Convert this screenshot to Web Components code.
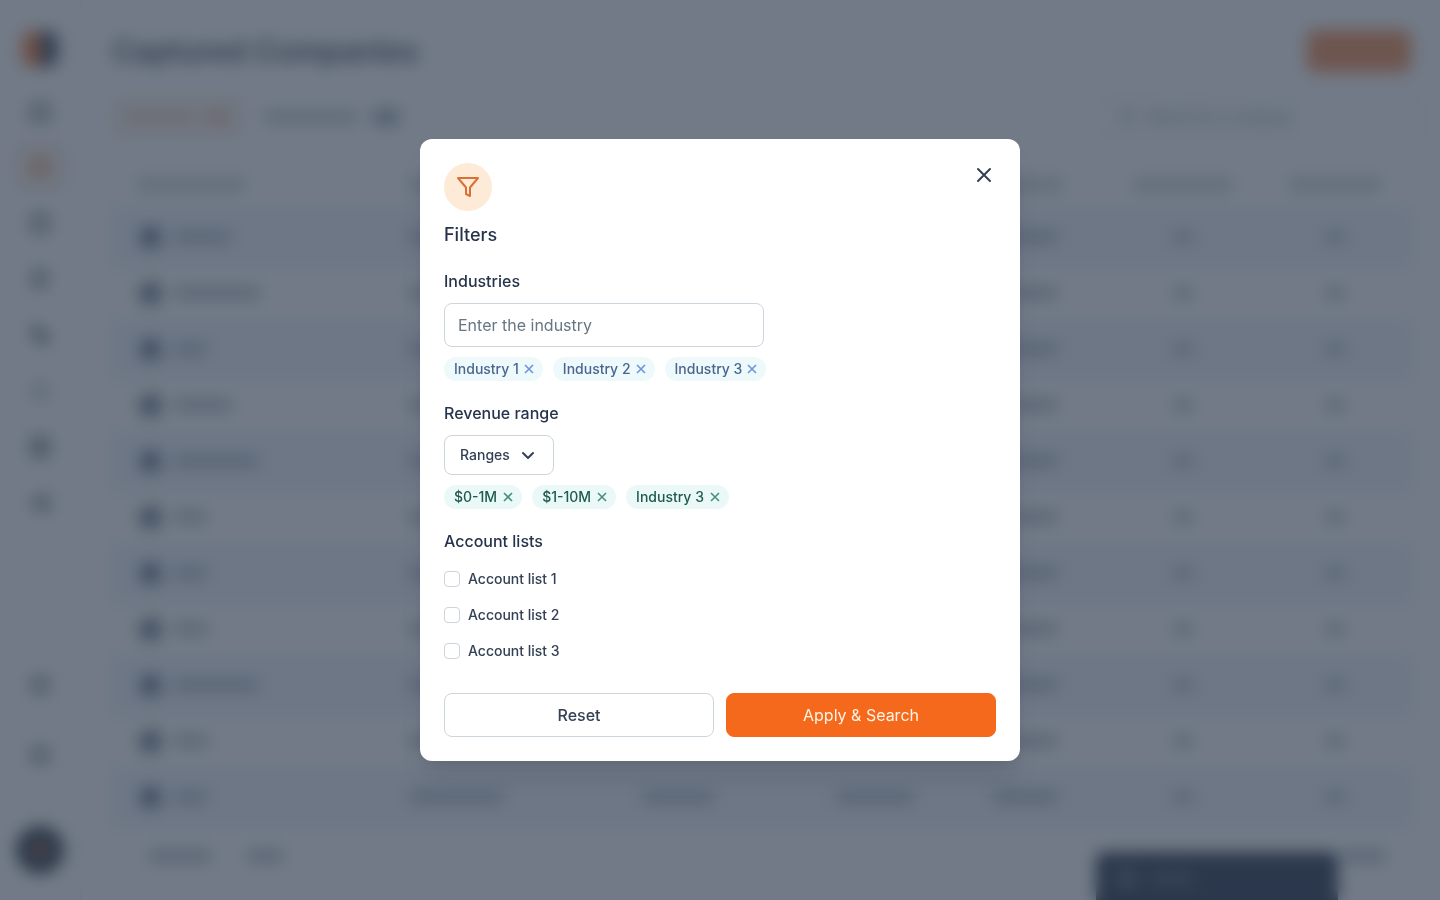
<!DOCTYPE html>
<html lang="en">
<head>
<meta charset="utf-8">
<meta name="viewport" content="width=device-width, initial-scale=1">
<title>Captured Companies</title>
<style>
  html, body { margin: 0; height: 100%; }
  body { font-family: Inter, "Liberation Sans", sans-serif; color: #1d2939; background: #fff; overflow: hidden; }
</style>
</head>
<body>
<companies-page inert></companies-page>
<modal-overlay>
  <filters-dialog></filters-dialog>
</modal-overlay>

<script>
const define = (name, html, setup) => {
  const template = document.createElement('template');
  template.innerHTML = html;
  customElements.define(name, class extends HTMLElement {
    constructor() {
      super();
      this.attachShadow({ mode: 'open' }).append(template.content.cloneNode(true));
    }
    connectedCallback() {
      if (setup) setup(this, this.shadowRoot);
    }
  });
};

/* Grey bar standing in for a value that is still loading. */
define('text-bar', `
  <style>
    :host { display: block; height: 10px; width: 60px; border-radius: 4px; background: var(--bar, #a3adbb); }
  </style>`, (el) => { el.style.width = (el.getAttribute('w') || 60) + 'px'; });

define('side-nav', `
  <style>
    :host { display: flex; flex-direction: column; align-items: center; box-sizing: border-box; width: 82px;
      padding: 31px 0 26px 0; border-right: 2px solid #eaecf0; background: #fff; }
    .logo { display: flex; width: 36px; height: 36px; border-radius: 10px; overflow: hidden; margin-bottom: 20px; }
    .logo i { flex: 1; background: #344054; }
    .logo i:first-child { background: #f4702b; }
    nav { display: flex; flex-direction: column; gap: 8px; }
    nav + nav { margin-top: auto; gap: 22px; }
    a { display: grid; place-items: center; width: 48px; height: 48px; border-radius: 6px; color: #475467; }
    a[aria-current] { color: #f4864b; background: #faeee6; }
    svg { width: 22px; height: 22px; fill: none; stroke: currentColor; stroke-width: 4; }
    hr { width: 48px; border: 0; border-top: 1px solid #eaecf0; margin: 26px 0 20px; }
    .avatar { display: grid; place-items: center; width: 48px; height: 48px; border-radius: 50%; background: #1d2939; }
    .avatar i { width: 12px; height: 12px; border-radius: 50%; background: #f4661b; }
  </style>
  <div class="logo"><i></i><i></i></div>
  <nav>
    <a href="#home"><svg viewBox="0 0 24 24"><path d="M3 10 12 3l9 7v11H3z"/></svg></a>
    <a href="#companies" aria-current="page"><svg viewBox="0 0 24 24"><circle cx="12" cy="12" r="8"/><path d="M12 8v8"/></svg></a>
    <a href="#lists"><svg viewBox="0 0 24 24"><rect x="5" y="4" width="14" height="16"/></svg></a>
    <a href="#reports"><svg viewBox="0 0 24 24"><rect x="6" y="5" width="11" height="13"/></svg></a>
    <a href="#calls"><svg viewBox="0 0 24 24"><path d="M5 5c0 8 6 14 14 14l1-5-5-2-2 2-4-4 2-2-2-4z"/></svg></a>
    <a href="#alerts"><svg viewBox="0 0 24 24" style="stroke-width:2"><circle cx="12" cy="12" r="7"/></svg></a>
    <a href="#board"><svg viewBox="0 0 24 24"><rect x="4" y="4" width="16" height="16"/><path d="M12 4v16"/></svg></a>
    <a href="#send"><svg viewBox="0 0 24 24"><path d="m4 12 15-7v14z"/></svg></a>
  </nav>
  <nav>
    <a href="#help"><svg viewBox="0 0 24 24"><circle cx="12" cy="12" r="8"/></svg></a>
    <a href="#settings"><svg viewBox="0 0 24 24"><circle cx="12" cy="12" r="8"/></svg></a>
  </nav>
  <hr>
  <div class="avatar"><i></i></div>`);

define('companies-table', `
  <style>
    :host { display: block; border: 1px solid #eaecf0; border-radius: 8px; }
    table { width: 100%; border-collapse: collapse; table-layout: fixed; }
    th, td { box-sizing: border-box; height: 56px; padding: 0 0 0 24px; border-bottom: 1px solid #eaecf0; }
    th { height: 48px; --bar: #bcc4cf; }
    tbody tr:nth-child(odd) { background: #f0f3fd; }
    .name { display: flex; align-items: center; gap: 12px; padding-left: 2px; }
    .name i { width: 23px; height: 23px; border-radius: 50%; background: #667389; }
    .center { padding: 0; }
    .center text-bar { margin: 0 auto; }
    footer { display: flex; align-items: center; gap: 36px; padding: 0 24px 0 36px; height: 60px; }
    footer :last-child { margin-left: auto; }
  </style>
  <table>
    <colgroup><col style="width:21%"><col style="width:18%"><col style="width:15%"><col style="width:12%"><col style="width:10.5%"><col style="width:12%"><col style="width:11.5%"></colgroup>
    <thead><tr>
      <th><text-bar w="108"></text-bar></th><th><text-bar w="80"></text-bar></th><th><text-bar w="70"></text-bar></th>
      <th><text-bar w="70"></text-bar></th><th><text-bar w="70"></text-bar></th>
      <th class="center"><text-bar w="98"></text-bar></th><th class="center"><text-bar w="92"></text-bar></th>
    </tr></thead>
    <tbody></tbody>
  </table>
  <footer><text-bar w="62"></text-bar><text-bar w="36"></text-bar><text-bar w="44"></text-bar></footer>`,
  (el, root) => {
    const widths = [56, 86, 32, 58, 84, 32, 32, 34, 84, 34, 32];
    root.querySelector('tbody').innerHTML = widths.map((w, i) => `<tr>
      <td><div class="name"><i></i><text-bar w="${w}"></text-bar></div></td>
      <td><text-bar w="94"></text-bar></td><td><text-bar w="70"></text-bar></td>
      <td><text-bar w="76"></text-bar></td><td><text-bar w="64"></text-bar></td>
      <td class="center"><text-bar w="18"></text-bar></td><td class="center"><text-bar w="18"></text-bar></td></tr>`).join('');
  });

define('chat-tab', `
  <style>
    :host { display: flex; align-items: center; gap: 12px; box-sizing: border-box; width: 242px; height: 48px; padding: 4px 20px 0;
      border-radius: 8px 8px 0 0; background: #17223c; --bar: #475467; }
    i { width: 22px; height: 22px; border-radius: 50%; background: #475467; }
  </style><i></i><text-bar w="44"></text-bar>`);

define('companies-page', `
  <style>
    :host { display: grid; grid-template-columns: auto 1fr; height: 100vh; overflow: hidden; }
    main { padding: 29px 29px 0 30px; }
    header { display: flex; align-items: center; justify-content: space-between; height: 44px; }
    h1 { margin: 0; font-size: 30px; line-height: 38px; font-weight: 600; color: #344054; }
    header button { width: 104px; height: 42px; border: 0; border-radius: 8px; background: #f4854a; }
    .tools { display: flex; align-items: center; height: 44px; margin: 22px -14px 21px 0; gap: 20px; }
    .tab { display: flex; align-items: center; gap: 14px; height: 40px; border: 0; background: none; padding: 0; --bar: #b4bbc8; }
    .tab[aria-selected=true] { padding: 0 12px; gap: 8px; background: #fcf4ef; border-radius: 6px; --bar: #f0c8ae; }
    .tab i { width: 28px; height: 16px; border-radius: 8px; background: var(--count, #98a2b3); }
    .tab[aria-selected=true] i { --count: #f0c8ae; }
    label { display: flex; align-items: center; gap: 10px; box-sizing: border-box; width: 328px; height: 44px; margin-left: auto;
      padding: 0 20px; border: 1px solid #d0d5dd; border-radius: 8px; }
    svg { width: 18px; height: 18px; fill: none; stroke: #667085; stroke-width: 2; }
    input { flex: 1; min-width: 0; border: 0; padding: 0; background: none; font: 400 14px/20px Inter, sans-serif; }
    input::placeholder { color: #667085; }
    chat-tab { position: fixed; right: 102px; bottom: 0; }
  </style>
  <side-nav></side-nav>
  <main>
    <header><h1>Captured Companies</h1><button type="button" aria-label="Add"></button></header>
    <div class="tools">
      <button class="tab" role="tab" aria-selected="true" aria-label="Companies"><text-bar w="72"></text-bar><i></i></button>
      <button class="tab" role="tab" aria-selected="false" aria-label="All companies"><text-bar w="94"></text-bar><i></i></button>
      <label><svg viewBox="0 0 24 24"><circle cx="11" cy="11" r="8"/><path d="m17 17 5 5"/></svg><input type="text" placeholder="Search for a company" aria-label="Search"></label>
    </div>
    <companies-table></companies-table>
  </main>
  <chat-tab></chat-tab>`);

define('modal-overlay', `
  <style>
    :host { position: fixed; inset: 0; display: grid; place-items: center; padding: 16px;
      background: rgba(52, 66, 82, .7); backdrop-filter: blur(8px); }
  </style><slot></slot>`);

define('filter-chip', `
  <style>
    :host { display: flex; align-items: center; gap: 4px; height: 24px; padding: 0 8px 0 10px; border-radius: 12px;
      background: #edf9fa; color: #4a6690; font-size: 14px; line-height: 20px; font-weight: 500; --cross: #6a95da; }
    :host([tone=green]) { gap: 5px; background: #eaf9f7; color: #1f5a4c; --cross: #47917a; }
    button { display: grid; place-items: center; width: 12px; height: 12px; padding: 0; border: 0; background: none; }
    svg { width: 12px; height: 12px; fill: none; stroke: var(--cross); stroke-width: 1.6; }
  </style>
  <slot></slot>
  <button type="button" aria-label="Remove"><svg viewBox="0 0 12 12"><path d="m2 2 8 8M10 2l-8 8"/></svg></button>`,
  (el, root) => { root.querySelector('button').onclick = () => el.remove(); });

define('check-row', `
  <style>
    :host { display: block; }
    label { display: flex; align-items: center; gap: 8px; font-size: 14px; line-height: 20px; font-weight: 500; color: #344054; }
    input { appearance: none; box-sizing: border-box; width: 16px; height: 16px; margin: 0; border: 1px solid #cdd5dc; border-radius: 4px; background: #fff; }
    input:checked { background: #f4661b; border-color: #f4661b; }
  </style>
  <label><input type="checkbox"><slot></slot></label>`);

define('filter-section', `
  <style>
    :host { display: flex; flex-direction: column; align-items: flex-start; gap: 10px; }
    h3 { margin: 0; font-size: 16px; line-height: 24px; font-weight: 500; color: #26334a; }
    ::slotted(*) { flex: none; }
  </style>
  <h3></h3><slot></slot>`,
  (el, root) => { root.querySelector('h3').textContent = el.getAttribute('heading'); });

define('action-button', `
  <style>
    :host { display: block; flex: 1; }
    button { box-sizing: border-box; width: 100%; height: 44px; border: 1px solid #cdd5dc; border-radius: 8px; background: #fff;
      color: #344054; font: 500 16px/24px Inter, "Liberation Sans", sans-serif; }
    :host([primary]) button { border-color: #f4691b; background: #f4691b; color: #fff3e6; font-weight: 400; }
  </style>
  <button type="button"><slot></slot></button>`);

define('filters-dialog', `
  <style>
    :host { display: flex; flex-direction: column; gap: 20px; box-sizing: border-box; width: 100%; max-width: 600px; padding: 24px;
      border-radius: 12px; background: #fff; box-shadow: 0 20px 24px -4px rgba(16, 24, 40, .1), 0 8px 8px -4px rgba(16, 24, 40, .04); }
    header { display: grid; grid-template-columns: 1fr auto; row-gap: 10px; }
    .badge { display: grid; place-items: center; width: 48px; height: 48px; border-radius: 50%; background: #fdead7; }
    .badge svg { width: 24px; height: 24px; fill: none; stroke: #dc6f35; stroke-width: 2; stroke-linejoin: round; }
    .close { display: grid; place-items: center; width: 24px; height: 24px; padding: 0; border: 0; background: none; }
    .close svg { width: 24px; height: 24px; fill: none; stroke: #344054; stroke-width: 2; stroke-linecap: round; }
    h2 { margin: 0; font-size: 18px; line-height: 28px; font-weight: 500; color: #26334a; }
    .field { box-sizing: border-box; width: 320px; max-width: 100%; height: 44px; padding: 0 13px; border: 1px solid #cdd5dc; border-radius: 8px;
      font: 400 16px/24px Inter, "Liberation Sans", sans-serif; color: #1d2939; background: #fff; }
    .field::placeholder { color: #667683; opacity: 1; }
    .chips { display: flex; flex-wrap: wrap; gap: 10px; }
    .select { display: grid; align-items: center; }
    .select > * { grid-area: 1 / 1; }
    select { appearance: none; box-sizing: border-box; width: 110px; height: 40px; padding: 0 32px 0 15px; border: 1px solid #cdd5dc;
      border-radius: 8px; background: #fff; color: #344054; font: 500 14px/20px Inter, "Liberation Sans", sans-serif; }
    .select svg { justify-self: end; width: 20px; height: 20px; margin-right: 16px; pointer-events: none; fill: none; stroke: #344054;
      stroke-width: 2; stroke-linecap: round; stroke-linejoin: round; }
    .checks { display: flex; flex-direction: column; gap: 16px; padding-top: 6px; }
    footer { display: flex; gap: 12px; margin-top: 12px; }
  </style>
  <header>
    <div class="badge"><svg viewBox="0 0 24 24"><path d="M2 3h20l-8 9.500v8.500l-4-2v-6.500z"/></svg></div>
    <button class="close" type="button" aria-label="Close"><svg viewBox="0 0 24 24"><path d="m6 6 12 12M18 6 6 18"/></svg></button>
    <h2>Filters</h2>
  </header>
  <filter-section heading="Industries">
    <input class="field" type="text" placeholder="Enter the industry" aria-label="Industries">
    <div class="chips"><filter-chip>Industry 1</filter-chip><filter-chip>Industry 2</filter-chip><filter-chip>Industry 3</filter-chip></div>
  </filter-section>
  <filter-section heading="Revenue range">
    <div class="select">
      <select aria-label="Revenue range"><option>Ranges</option></select>
      <svg viewBox="0 0 20 20"><path d="m5 8 5 5 5-5"/></svg>
    </div>
    <div class="chips"><filter-chip tone="green">$0-1M</filter-chip><filter-chip tone="green">$1-10M</filter-chip><filter-chip tone="green">Industry 3</filter-chip></div>
  </filter-section>
  <filter-section heading="Account lists">
    <div class="checks"><check-row>Account list 1</check-row><check-row>Account list 2</check-row><check-row>Account list 3</check-row></div>
  </filter-section>
  <footer><action-button>Reset</action-button><action-button primary>Apply &amp; Search</action-button></footer>`);
</script>
</body>
</html>
